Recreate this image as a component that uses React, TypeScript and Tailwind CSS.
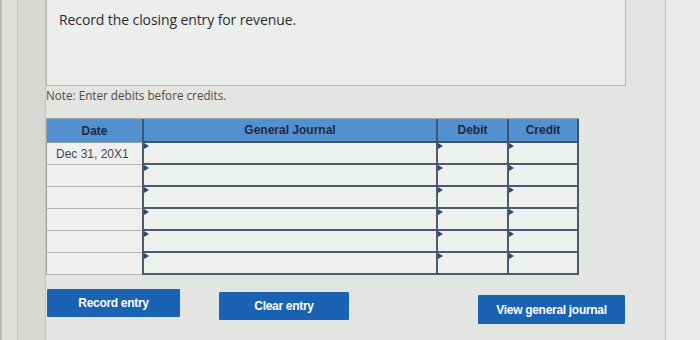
const rows = ['Dec 31, 20X1', '', '', '', '', ''];

function Marker() {
    return (
        <span className="absolute left-0 top-0 h-0 w-0 border-y-[3px] border-l-[5px] border-y-transparent border-l-[#2f4a6e]" />
    );
}

function EntryCell({ width, last }: { width: string; last?: boolean }) {
    return (
        <div
            className={`relative h-full border-b-2 border-l-2 border-[#4b5a6c] bg-[#eef0ee] ${width} ${last ? 'border-r-2' : ''}`}
        >
            <Marker />
        </div>
    );
}

export default function App() {
    return (
        <div
            className="flex h-[340px] w-[700px] overflow-hidden bg-[#e3e5e2]"
            style={{ fontFamily: '"Liberation Sans", Arial, sans-serif' }}
        >
            {/* the browser chrome down the left of the photo */}
            <div className="w-[17px] shrink-0 border-l-2 border-[#b9bab7] bg-[#dededb]" />
            <div className="w-[29px] shrink-0 border-l border-r border-[#c4c5c1] bg-[#d7d8d4]" />

            <div className="flex w-[619px] shrink-0 flex-col">
                <div className="h-[86px] w-[580px] border border-t-0 border-[#b5b9b5] bg-[#eceeec] pl-[12px] pt-[9px]">
                    <p
                        className="text-[14px] tracking-[-0.1px] text-[#2c2c2c]"
                        style={{ fontFamily: '"Open Sans", "Noto Sans", sans-serif' }}
                    >
                        Record the closing entry for revenue.
                    </p>
                </div>

                <p
                    className="mt-[1px] text-[11.7px] leading-[16px] text-[#5a4848]"
                    style={{ fontFamily: '"Open Sans", "Noto Sans", sans-serif' }}
                >
                    Note: Enter debits before credits.
                </p>

                <div className="mt-[15px] w-[533px] border-l border-t border-[#9aa3ab]">
                    <div className="flex h-[24px] bg-[#5390cf] text-[12px] font-bold text-[#1d2a45]">
                        <div className="flex w-[95px] items-center justify-center border-b border-[#8a9aa8]">Date</div>
                        <div className="flex w-[294px] items-center justify-center border-b-2 border-l-2 border-[#3d5470]">
                            General Journal
                        </div>
                        <div className="flex w-[71px] items-center justify-center border-b-2 border-l-2 border-[#3d5470]">
                            Debit
                        </div>
                        <div className="flex w-[72px] items-center justify-center border-b-2 border-l-2 border-r-2 border-[#3d5470]">
                            Credit
                        </div>
                    </div>
                    {rows.map((date, i) => (
                        <div key={i} className="flex h-[22px]">
                            <div className="flex w-[95px] items-center border-b border-[#b3b5b3] bg-[#efefed] pl-[9px] text-[12px] text-[#474747]">
                                {date}
                            </div>
                            <EntryCell width="w-[294px]" />
                            <EntryCell width="w-[71px]" />
                            <EntryCell width="w-[72px]" last />
                        </div>
                    ))}
                </div>

                <div className="mt-[14px] flex items-start text-[12px] font-bold tracking-[-0.3px] text-white">
                    <button className="ml-[1px] h-[28px] w-[133px] rounded-[1px] bg-[#1a62b2]">Record entry</button>
                    <button className="ml-[39px] mt-[3px] h-[28px] w-[130px] rounded-[1px] bg-[#1a62b2]">Clear entry</button>
                    <button className="ml-[129px] mt-[6px] h-[29px] w-[147px] rounded-[1px] bg-[#1a62b2]">
                        View general journal
                    </button>
                </div>
            </div>

            <div className="w-[1px] shrink-0 bg-[#babdb9]" />
            <div className="flex-1 bg-[#e9ebe8]" />
        </div>
    );
}
